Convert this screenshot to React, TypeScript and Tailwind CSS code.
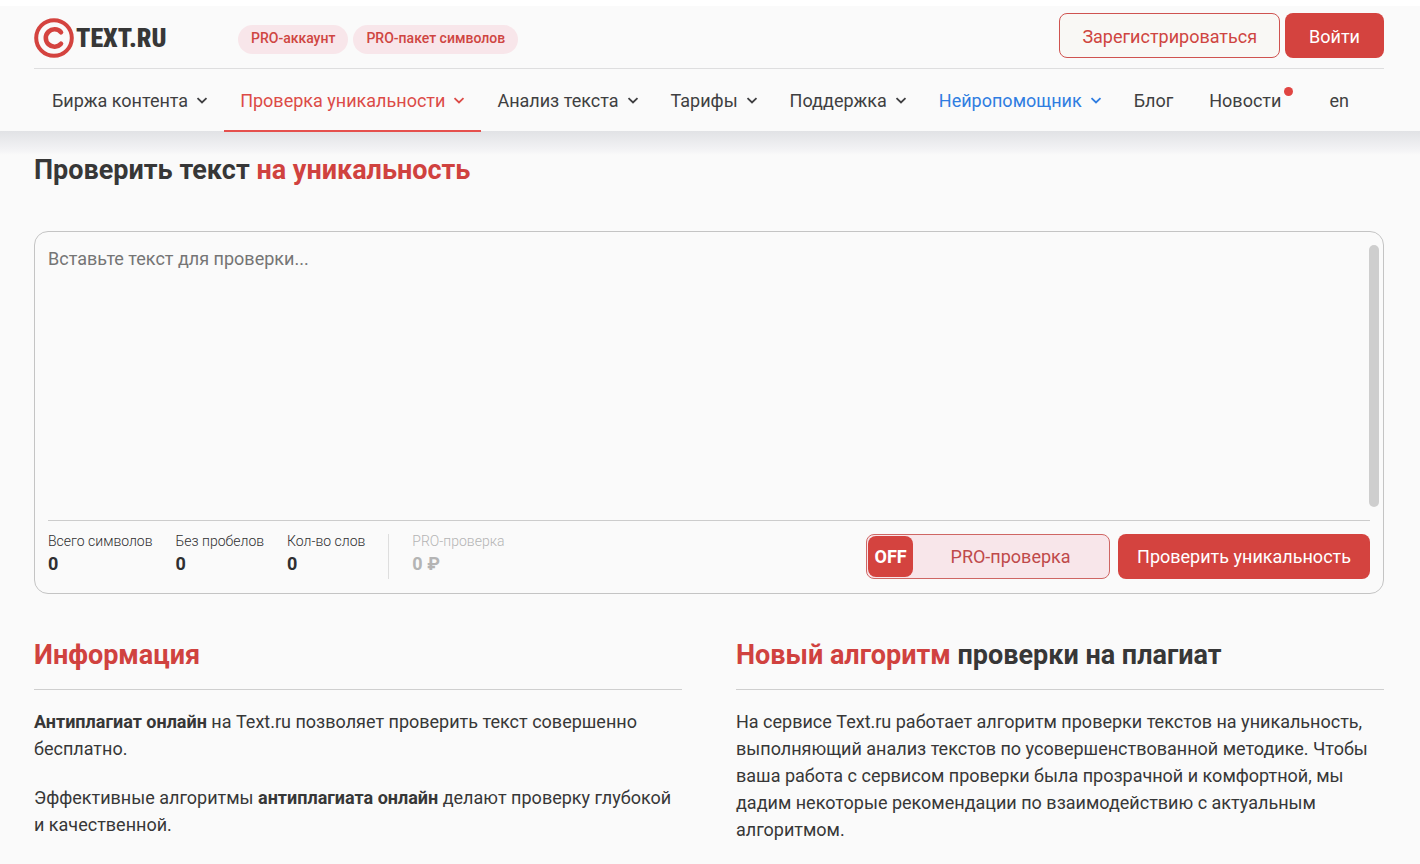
import { useState } from "react";

type NavItem = {
  title: string;
  menu?: boolean;
  active?: boolean;
  accent?: boolean;
  dot?: boolean;
};

const NAV: NavItem[] = [
  { title: "Биржа контента", menu: true },
  { title: "Проверка уникальности", menu: true, active: true },
  { title: "Анализ текста", menu: true },
  { title: "Тарифы", menu: true },
  { title: "Поддержка", menu: true },
  { title: "Нейропомощник", menu: true, accent: true },
  { title: "Блог" },
  { title: "Новости", dot: true },
  { title: "en" },
];

function Logo() {
  return (
    <a href="#" className="flex w-[204px] items-center gap-[2px]">
      <svg width="40" height="40" viewBox="0 0 40 40" className="shrink-0">
        <circle
          cx="20"
          cy="20"
          r="17.8"
          fill="none"
          stroke="#d4433f"
          strokeWidth="4"
        />
        <path
          d="M27 14.2A8.7 8.7 0 1 0 27 25.8"
          fill="none"
          stroke="#d4433f"
          strokeWidth="4.6"
          strokeLinecap="round"
        />
      </svg>
      <span className="font-['Roboto_Condensed','Roboto',sans-serif] text-[26px] leading-8 font-black">
        TEXT.RU
      </span>
    </a>
  );
}

function Chevron() {
  return (
    <svg
      width="12"
      height="12"
      viewBox="0 0 12 12"
      fill="none"
      stroke="currentColor"
      strokeWidth="1.8"
      className="ml-2 shrink-0"
    >
      <path d="M1.5 4.2 6 8.5 10.5 4.2" />
    </svg>
  );
}

function NavLink({ item }: { item: NavItem }) {
  const color = item.active
    ? "border-[#e5504d] text-[#dc4b47]"
    : item.accent
      ? "border-transparent text-[#2f7de1]"
      : "border-transparent text-[#3f3f41]";
  return (
    <li>
      <a
        href="#"
        className={`-mb-px flex h-[63px] items-center border-b-2 pt-px pl-4 whitespace-nowrap ${item.menu ? "pr-4" : "pr-5"} ${color}`}
      >
        {item.title}
        {item.menu && <Chevron />}
        {item.dot && (
          <span className="mb-[18px] ml-[3px] size-[9px] rounded-full bg-[#e04542]" />
        )}
      </a>
    </li>
  );
}

function Header() {
  return (
    <header className="bg-[#fafafa] pr-9 pl-[34px]">
      <div className="flex items-end border-b border-[#dededf] pt-[7px] pb-[10px]">
        <Logo />
        <div className="mb-1 flex gap-[5px] text-sm font-medium text-[#cf4541]">
          <a
            href="#"
            className="rounded-full bg-[#f8e6ea] px-[13px] pt-[3px] pb-[6px]"
          >
            PRO-аккаунт
          </a>
          <a
            href="#"
            className="rounded-full bg-[#f8e6ea] px-[13px] pt-[3px] pb-[6px]"
          >
            PRO-пакет символов
          </a>
        </div>
        <div className="ml-auto flex gap-[5px]">
          <button
            type="button"
            className="h-[45px] rounded-lg border border-[#cf5350] bg-[#f9f8f5] px-[22px] pt-0.5 text-[#cf4541]"
          >
            Зарегистрироваться
          </button>
          <button
            type="button"
            className="h-[45px] rounded-lg bg-[#d4433f] px-6 pt-0.5 text-white"
          >
            Войти
          </button>
        </div>
      </div>
      <nav>
        <ul className="flex pl-[2px]">
          {NAV.map((item) => (
            <NavLink key={item.title} item={item} />
          ))}
        </ul>
      </nav>
    </header>
  );
}

function Stat({
  label,
  value,
  muted,
}: {
  label: string;
  value: string;
  muted?: boolean;
}) {
  return (
    <div className={muted ? "text-[#b4b4b4]" : "text-[#2f2f31]"}>
      <div className="text-sm leading-[14px] font-light">{label}</div>
      <div className="mt-0.5 leading-[27px] font-bold">{value}</div>
    </div>
  );
}

function Checker() {
  const [text, setText] = useState("");
  const [pro, setPro] = useState(false);
  const words = text.split(/\s+/).filter(Boolean);

  return (
    <form
      onSubmit={(e) => e.preventDefault()}
      className="rounded-[14px] border border-[#c4c4c4] px-[13px] pt-[13px] pb-[14px]"
    >
      <div className="-mr-[9px] flex h-[275px] items-start">
        <textarea
          aria-label="Текст для проверки"
          placeholder="Вставьте текст для проверки..."
          value={text}
          onChange={(e) => setText(e.target.value)}
          className="h-full min-w-0 flex-1 resize-none leading-[27px] outline-none placeholder:text-[#757575]"
        />
        <div className="h-[262px] w-[10px] rounded-full bg-[#cecece]" />
      </div>
      <div className="flex items-start gap-[23px] border-t border-[#cccccc] pt-[13px]">
        <Stat label="Всего символов" value={String(text.length)} />
        <Stat
          label="Без пробелов"
          value={String(text.replace(/\s/g, "").length)}
        />
        <Stat label="Кол-во слов" value={String(words.length)} />
        <div className="h-[45px] border-l border-[#dedede]" />
        <Stat label="PRO-проверка" value="0 ₽" muted />
        <div className="ml-auto flex gap-2">
          <label className="flex h-[45px] w-[244px] cursor-pointer items-center rounded-lg border border-[#cf6664] bg-[#f8e6ea] p-px text-[#bf4a4a]">
            <input
              type="checkbox"
              checked={pro}
              onChange={(e) => setPro(e.target.checked)}
              className="sr-only"
            />
            <span className="flex h-full w-[45px] items-center justify-center rounded-lg bg-[#d4433f] font-bold text-white">
              {pro ? "ON" : "OFF"}
            </span>
            <span className="flex-1 text-center">PRO-проверка</span>
          </label>
          <button
            type="submit"
            className="h-[45px] rounded-lg bg-[#d4433f] px-[19px] text-white"
          >
            Проверить уникальность
          </button>
        </div>
      </div>
    </form>
  );
}

function Info() {
  return (
    <div className="mt-[43px] grid grid-cols-2 gap-[54px] leading-[27px]">
      <section>
        <h2 className="border-b border-[#cfcfcf] pb-4 text-[27px] leading-9 font-bold text-[#d0423f]">
          Информация
        </h2>
        <p className="mt-[18px]">
          <b className="font-bold">Антиплагиат онлайн</b> на Text.ru позволяет
          проверить текст совершенно бесплатно.
        </p>
        <p className="mt-[22px]">
          Эффективные алгоритмы{" "}
          <b className="font-bold">антиплагиата онлайн</b> делают проверку
          глубокой и качественной.
        </p>
      </section>
      <section>
        <h2 className="border-b border-[#cfcfcf] pb-4 text-[27px] leading-9 font-bold">
          <span className="text-[#d0423f]">Новый алгоритм</span> проверки на
          плагиат
        </h2>
        <p className="mt-[18px]">
          На сервисе Text.ru работает алгоритм проверки текстов на уникальность,
          выполняющий анализ текстов по усовершенствованной методике. Чтобы ваша
          работа с сервисом проверки была прозрачной и комфортной, мы дадим
          некоторые рекомендации по взаимодействию с актуальным алгоритмом.
        </p>
      </section>
    </div>
  );
}

export default function App() {
  return (
    <div className="min-h-screen border-t-[6px] border-white bg-[#fafafa] font-['Roboto',sans-serif] text-[18px] text-[#373737]">
      <Header />
      <main className="bg-[linear-gradient(#e1e2e5,#f2f2f4_18px,#fafafa_24px)] pt-[21px] pr-9 pb-4 pl-[34px]">
        <h1 className="mb-[43px] text-[27px] leading-9 font-bold">
          Проверить текст{" "}
          <span className="text-[#d0423f]">на уникальность</span>
        </h1>
        <Checker />
        <Info />
      </main>
    </div>
  );
}
